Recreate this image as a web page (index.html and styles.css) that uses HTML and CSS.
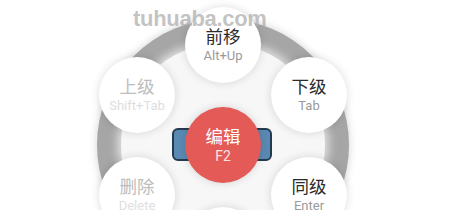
FILE: index.html
```html
<!DOCTYPE html>
<html>
<head>
<meta charset="utf-8">
<link rel="stylesheet" href="styles.css">
</head>
<body>
<div class="stage">
  <div class="ring"></div>
  <div class="inner"></div>
  <div class="bar"></div>
  <div class="node n-top"><span class="lbl">前移</span><span class="sub">Alt+Up</span></div>
  <div class="node n-ru"><span class="lbl">下级</span><span class="sub">Tab</span></div>
  <div class="node n-rd"><span class="lbl">同级</span><span class="sub">Enter</span></div>
  <div class="node n-bot"><span class="lbl">添加</span><span class="sub">Insert</span></div>
  <div class="node n-ld off"><span class="lbl">删除</span><span class="sub">Delete</span></div>
  <div class="node n-lu off"><span class="lbl">上级</span><span class="sub">Shift+Tab</span></div>
  <div class="node center"><span class="lbl">编辑</span><span class="sub">F2</span></div>
  <div class="mark">tuhuaba.com</div>
</div>
</body>
</html>
```

FILE: styles.css
```css
html, body {
  margin: 0;
  padding: 0;
  background: #ffffff;
  overflow: hidden;
}
.stage {
  position: relative;
  width: 450px;
  height: 210px;
  overflow: hidden;
  font-family: Roboto, "Noto Sans CJK SC", sans-serif;
}
.ring {
  position: absolute;
  left: 97px;
  top: 19px;
  width: 252px;
  height: 252px;
  border-radius: 50%;
  background: #a6a6a6;
  box-shadow: 0 0 8px rgba(0, 0, 0, 0.18);
}
.inner {
  position: absolute;
  left: 121px;
  top: 43px;
  width: 204px;
  height: 204px;
  border-radius: 50%;
  background: #f7f7f7;
  box-shadow: 0 0 8px 4px rgba(240, 240, 240, 0.75);
}
.bar {
  position: absolute;
  left: 172px;
  top: 128px;
  width: 96px;
  height: 29px;
  border: 2.5px solid #263a4f;
  border-radius: 6px;
  background: #5a8ab4;
}
.node {
  position: absolute;
  width: 76px;
  height: 76px;
  margin-left: -38px;
  margin-top: -38px;
  border-radius: 50%;
  background: #ffffff;
  box-shadow: 0 0 10px rgba(0, 0, 0, 0.14);
  display: flex;
  flex-direction: column;
  align-items: center;
  justify-content: center;
}
.lbl {
  font-family: "Noto Sans CJK SC", sans-serif;
  font-size: 17.5px;
  line-height: 20px;
  color: #2b2b2b;
  margin-top: -1px;
}
.sub {
  font-size: 13px;
  line-height: 16px;
  color: #9a9a9a;
  margin-top: 2px;
}
.off .lbl { color: #bdbdbd; }
.off .sub { color: #dedede; }
.n-top { left: 223px; top: 45px; }
.n-ru { left: 309px; top: 95px; }
.n-rd { left: 309px; top: 195px; }
.n-bot { left: 223px; top: 245px; }
.n-ld { left: 137px; top: 195px; }
.n-lu { left: 137px; top: 95px; }
.center {
  left: 223px;
  top: 145px;
  background: #e35a56;
  box-shadow: 0 0 8px rgba(0, 0, 0, 0.15);
}
.center .lbl { color: #ffffff; }
.center .sub { color: #fbe3e2; font-size: 14px; }
.mark {
  position: absolute;
  left: 133px;
  top: 5px;
  font-family: "Liberation Sans", sans-serif;
  font-weight: bold;
  font-size: 22px;
  line-height: 28px;
  color: rgba(175, 175, 175, 0.75);
  letter-spacing: -0.3px;
}
```
